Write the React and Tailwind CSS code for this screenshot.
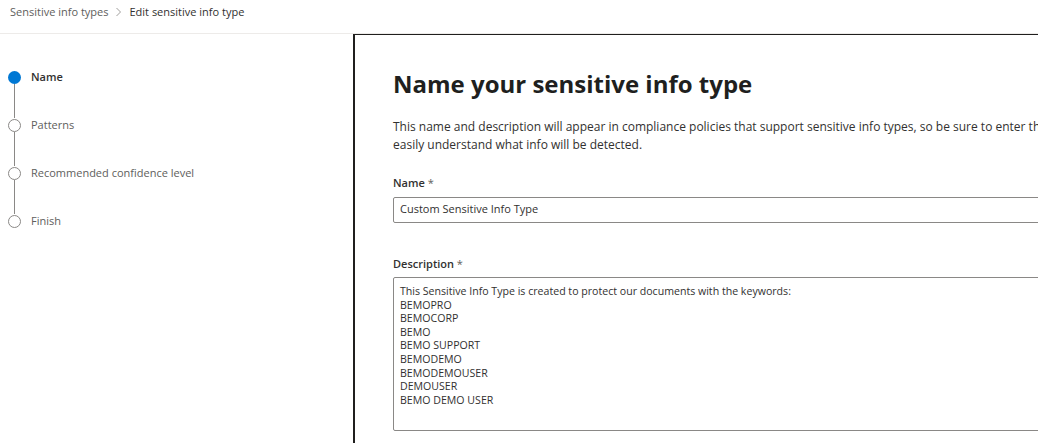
import React from "react";

const steps = [
  { label: "Name", active: true },
  { label: "Patterns" },
  { label: "Recommended confidence level" },
  { label: "Finish" },
];

const keywords = [
  "This Sensitive Info Type is created to protect our documents with the keywords:",
  "BEMOPRO",
  "BEMOCORP",
  "BEMO",
  "BEMO SUPPORT",
  "BEMODEMO",
  "BEMODEMOUSER",
  "DEMOUSER",
  "BEMO DEMO USER",
];

function StepList() {
  return (
    <div className="pt-[36px] pl-[8px]">
      {steps.map((s, i) => (
        <div key={s.label} className="flex flex-col">
          <div className="flex items-center h-[14px]">
            {s.active ? (
              <span className="w-[13px] h-[13px] rounded-full bg-[#0078d4]" />
            ) : (
              <span className="w-[13px] h-[13px] rounded-full border border-[#8a8886] bg-white" />
            )}
            <span
              className={
                "ml-[10px] text-[11px] " +
                (s.active ? "font-semibold text-[#323130]" : "text-[#605e5c]")
              }
            >
              {s.label}
            </span>
          </div>
          {i < steps.length - 1 && (
            <div className="ml-[6px] w-px h-[34px] bg-[#8a8886]" />
          )}
        </div>
      ))}
    </div>
  );
}

export default function App() {
  return (
    <div
      className="w-[1038px] h-[443px] overflow-hidden bg-white text-[#323130]"
      style={{ fontFamily: '"Open Sans", "Noto Sans", sans-serif' }}
    >
      {/* breadcrumb */}
      <div className="h-[34px] flex items-center px-[10px] text-[11px] border-b border-[#edebe9] pb-[9px]">
        <span className="text-[#605e5c]">Sensitive info types</span>
        <svg className="mx-[7px]" width="7" height="10" viewBox="0 0 7 10">
          <path d="M1.5 1 L5.5 5 L1.5 9" fill="none" stroke="#a19f9d" strokeWidth="1" />
        </svg>
        <span>Edit sensitive info type</span>
      </div>

      <div className="flex">
        <div className="w-[353px] shrink-0">
          <StepList />
        </div>

        <div className="w-[800px] shrink-0 h-[420px] border-l-2 border-t border-[#201f1e] pl-[38px] pt-[33px]">
          <h1 className="text-[24px] leading-[32px] font-bold text-[#201f1e]">
            Name your sensitive info type
          </h1>
          <p className="mt-[18px] text-[12px] leading-[18px] whitespace-nowrap">
            This name and description will appear in compliance policies that support sensitive info types, so be sure to enter the info that helps people
            <br />
            easily understand what info will be detected.
          </p>

          <div className="mt-[21px] text-[11px] font-semibold">
            Name <span className="text-[#605e5c] font-normal">*</span>
          </div>
          <div className="mt-[5px] w-[700px] h-[26px] border border-[#8a8886] rounded-[2px] flex items-center px-[6px] text-[11px]">
            Custom Sensitive Info Type
          </div>

          <div className="mt-[33px] text-[11px] font-semibold">
            Description <span className="text-[#605e5c] font-normal">*</span>
          </div>
          <div className="mt-[5px] w-[700px] h-[154px] border border-[#8a8886] rounded-[2px] px-[6px] pt-[7px] text-[10.6px] leading-[13.6px]">
            {keywords.map((k) => (
              <div key={k}>{k}</div>
            ))}
          </div>
        </div>
      </div>
    </div>
  );
}
